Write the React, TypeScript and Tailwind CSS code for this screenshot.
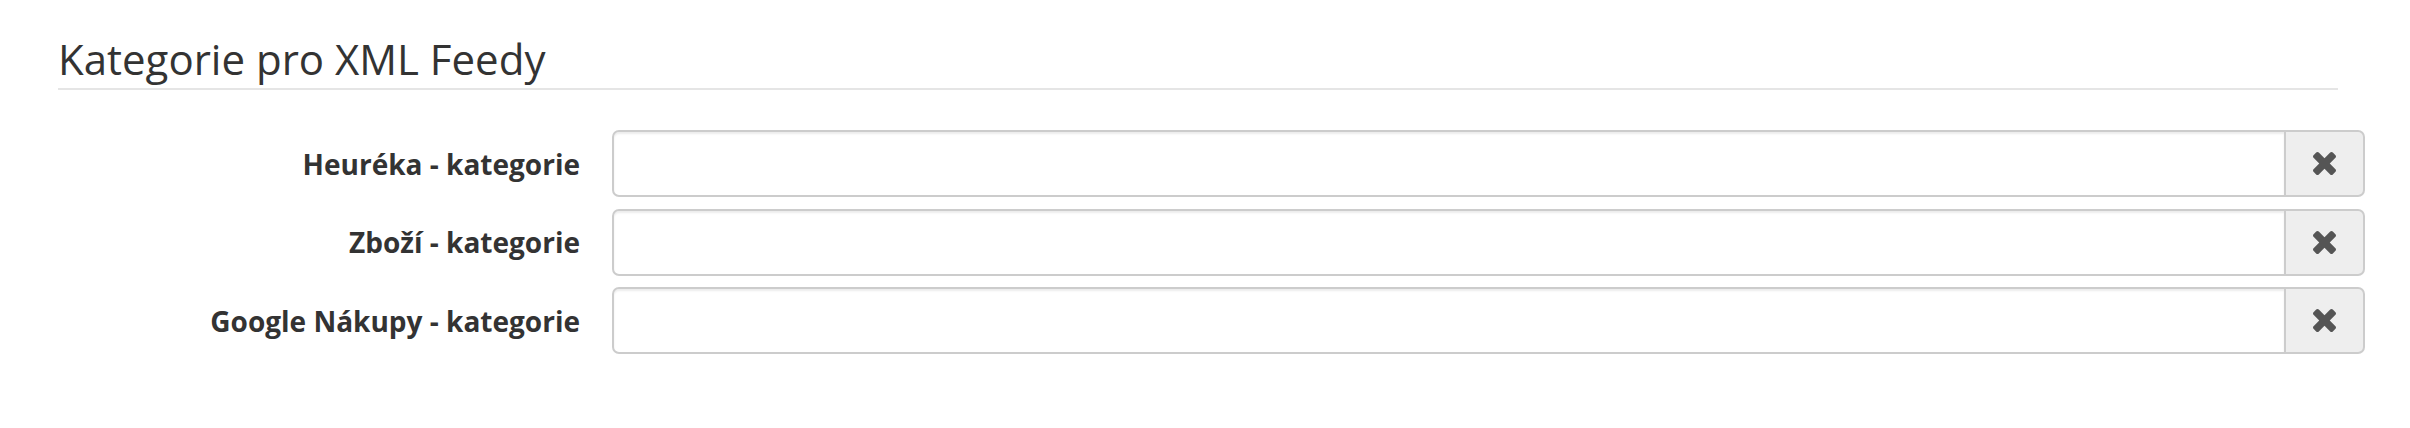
import React from 'react';

const ROWS = ['Heuréka - kategorie', 'Zboží - kategorie', 'Google Nákupy - kategorie'];

function TimesIcon() {
  return (
    <svg viewBox="302 366 1188 1188" className="w-[23px] h-[23px]" fill="#555">
      <path d="M1490 1322q0 40-28 68l-136 136q-28 28-68 28t-68-28l-294-294-294 294q-28 28-68 28t-68-28l-136-136q-28-28-28-68t28-68l294-294-294-294q-28-28-28-68t28-68l136-136q28-28 68-28t68 28l294 294 294-294q28-28 68-28t68 28l136 136q28 28 28 68t-28 68l-294 294 294 294q28 28 28 68z" />
    </svg>
  );
}

export default function App() {
  return (
    <div className="w-[2410px] h-[428px] bg-white pl-[58px] text-[#333]" style={{ fontFamily: '"Open Sans", sans-serif' }}>
      {/* Section heading */}
      <div className="w-[2280px] pt-[29px] border-b-2 border-[#e5e5e5]">
        <h2 className="text-[42px] leading-[59px] font-normal">Kategorie pro XML Feedy</h2>
      </div>

      {/* Category rows */}
      <div className="flex flex-col gap-[11.5px] mt-[40px]">
        {ROWS.map(label => (
          <div key={label} className="flex items-center gap-[32px]">
            <label className="w-[522px] text-right text-[28px] font-bold">{label}</label>
            <div className="flex w-[1753px] h-[67px]">
              <input
                type="text"
                className="flex-1 h-full border-2 border-[#ccc] rounded-l-[7px] bg-white shadow-[inset_0_2px_2px_rgba(0,0,0,0.075)] outline-none px-4"
              />
              <button className="w-[79px] h-full flex items-center justify-center bg-[#eee] border-2 border-l-0 border-[#ccc] rounded-r-[7px]">
                <TimesIcon />
              </button>
            </div>
          </div>
        ))}
      </div>
    </div>
  );
}
